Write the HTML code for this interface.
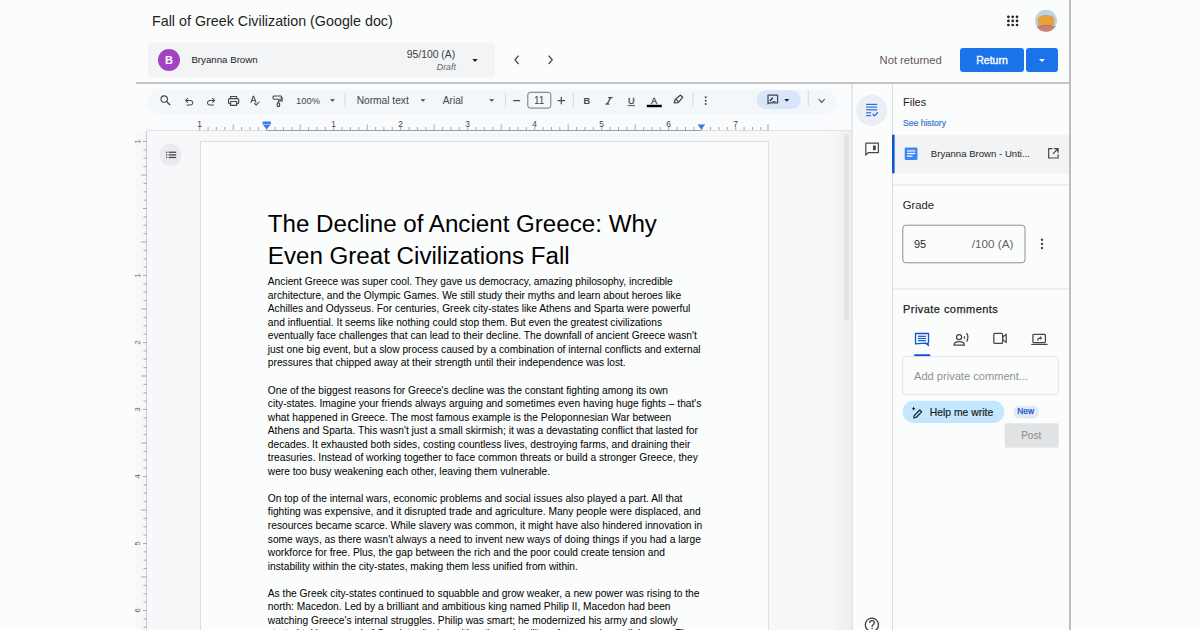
<!DOCTYPE html>
<html><head><meta charset="utf-8">
<style>
*{box-sizing:border-box;margin:0;padding:0}
html,body{width:1200px;height:630px;overflow:hidden;background:#fbfcfc;font-family:"Liberation Sans",sans-serif;color:#202124}
.a{position:absolute}
.nw{white-space:nowrap}
#title{left:152px;top:12px;font-size:14.3px;color:#1f1f1f;line-height:18px}
#stubar{left:147.5px;top:43.3px;width:347.7px;height:33.4px;background:#f3f4f6;border-radius:4px}
#av{left:158px;top:49px;width:22px;height:22px;border-radius:50%;background:#a142c3;color:#fff;font-size:11px;font-weight:bold;text-align:center;line-height:22px}
#sname{left:191.4px;top:53px;font-size:9.7px;line-height:13px;color:#202124}
#sgrade{left:406.8px;top:48.2px;font-size:10.35px;line-height:13px;color:#3c4043}
#draft{left:436.8px;top:61.6px;font-size:8.8px;font-style:italic;line-height:11px;color:#5f6368}
#topline{left:136px;top:82px;width:935px;height:2px;background:#c4c4c4}
#rline{left:1069px;top:0;width:2px;height:630px;background:#bdbdbd}
#rightbg{left:1071px;top:0;width:129px;height:630px;background:#fbfcfc}
#notret{left:879.6px;top:53.5px;font-size:11.2px;line-height:13px;color:#5f5a57}
#retbtn{left:960px;top:48px;width:64px;height:24px;background:#1a73e8;border-radius:3px;color:#fff;font-size:10.5px;-webkit-text-stroke:0.35px #fff;text-align:center;line-height:24px}
#retdd{left:1026px;top:48px;width:32px;height:24px;background:#1a73e8;border-radius:3px}
/* doc area */
#docarea{left:136px;top:84px;width:716px;height:546px;background:#f9fbfd}
#toolbar{left:148px;top:88px;width:692px;height:26px;background:#edf2fa;border-radius:13px}
#vruler{left:136px;top:131px;width:11px;height:499px;background:#f7f8f9;border-right:1px solid #c8cbcf}
#canvas{left:147px;top:130px;width:705px;height:500px;background:linear-gradient(90deg,#f7f8f9 0,#f7f8f9 680px,#eceef0 705px);border-top:1px solid #e1e3e6}
#page{left:201px;top:142px;width:567px;height:488px;background:#fbfdfd;box-shadow:0 0 0 1px #dcdee2}
#hruler{left:200px;top:116px;width:568px;height:15px}
#sbthumb{left:843.5px;top:134px;width:5.5px;height:186px;background:#e3e4e6;border-radius:1px}
#doctext{left:267.8px;top:207.6px;width:440px}
.t{font-size:24.15px;line-height:32px;color:#000}
.p{font-size:10.23px;line-height:13.55px;color:#000}
#sidecol{left:851px;top:84px;width:41px;height:546px;background:#fbfcfc;border-left:2px solid #e6e7e8}
#panel{left:892px;top:84px;width:177px;height:546px;background:#fbfcfc;border-left:1px solid #dadce0}
</style></head><body>
<div class="a" id="rightbg"></div>
<div class="a nw" id="title">Fall of Greek Civilization (Google doc)</div>
<div class="a" id="stubar"></div>
<div class="a" id="av">B</div>
<div class="a nw" id="sname">Bryanna Brown</div>
<div class="a nw" id="sgrade">95/100 (A)</div>
<div class="a nw" id="draft">Draft</div>
<div class="a nw" id="notret">Not returned</div>
<div class="a" id="retbtn">Return</div>
<div class="a" id="retdd"></div>

<div class="a" id="docarea"></div>
<svg class="a" style="left:0;top:0" width="1200" height="630" viewBox="0 0 1200 630">
<rect x="148" y="90" width="688" height="24" rx="12" fill="#f3f6fa"/>
<g fill="none" stroke="#444746" stroke-width="1.25" stroke-linecap="round">
 <circle cx="164.2" cy="99.1" r="3.2" stroke-width="1.1"/>
 <line x1="166.6" y1="101.5" x2="169.8" y2="104.7"/>
</g>
<g fill="#444746">
 <path transform="translate(182.9,108.2) scale(0.013)" d="M280-200v-80h284q63 0 109.5-40T720-420q0-60-46.5-100T564-560H312l104 104-56 56-200-200 200-200 56 56-104 104h252q97 0 166.5 63T800-420q0 94-69.5 157T564-200H280Z"/>
 <path transform="translate(204.9,108.2) scale(0.013)" d="M396-200q-97 0-166.5-63T160-420q0-94 69.5-157T396-640h252L544-744l56-56 200 200-200 200-56-56 104-104H396q-63 0-109.5 40T240-420q0 60 46.5 100T396-280h284v80H396Z"/>
 
 <path transform="translate(248.7,106.9) scale(0.0132)" d="M564-80 394-250l56-56 114 114 226-226 56 56L564-80ZM120-320l194-520h92l194 520h-88l-46-132H254l-46 132h-88Zm162-208h156l-76-216h-4l-76 216Z"/>
</g>
<g fill="none" stroke="#444746" stroke-width="1.15" stroke-linejoin="round">
 <rect x="273.1" y="96" width="8.4" height="3.2" rx="0.9"/>
 <polyline points="281.5,97.6 282.1,97.6 282.1,100.9 278.4,100.9 278.4,102.8"/>
 <rect x="277.2" y="102.8" width="2.4" height="3.6" rx="1"/>
 <path d="M230.6,98.6 v-2.1 h6 v2.1"/>
 <rect x="228.5" y="98.6" width="10.2" height="5" rx="1.2"/>
 <rect x="230.6" y="101.5" width="6" height="3.9" fill="#f3f6fa"/>
</g>
<g font-family="Liberation Sans" fill="#444746">
 <text x="296" y="104" font-size="9.4">100%</text>
 <text x="356.7" y="104" font-size="10.2">Normal text</text>
 <text x="442.8" y="104" font-size="10.1">Arial</text>
 <text x="539.2" y="104.3" font-size="10" text-anchor="middle">11</text>
</g>
<g fill="#444746">
 <path d="M330,99.2 h5 l-2.5,2.6z"/>
 <path d="M420.5,99.2 h5 l-2.5,2.6z"/>
 <path d="M489.2,99.2 h5 l-2.5,2.6z"/>
</g>
<g stroke="#d5d7da" stroke-width="1">
 <line x1="345" y1="93" x2="345" y2="107"/>
 <line x1="505.5" y1="93" x2="505.5" y2="107"/>
 <line x1="573.3" y1="93" x2="573.3" y2="107"/>
 <line x1="692.9" y1="93" x2="692.9" y2="106"/>
 <line x1="808.3" y1="90" x2="808.3" y2="106"/>
</g>
<g stroke="#444746" stroke-width="1.2" fill="none">
 <line x1="513.2" y1="100.6" x2="520.2" y2="100.6"/>
 <line x1="557.6" y1="100.6" x2="565" y2="100.6"/>
 <line x1="561.3" y1="96.9" x2="561.3" y2="104.3"/>
</g>
<rect x="527.8" y="92.3" width="23" height="15.8" rx="2.5" fill="none" stroke="#747775" stroke-width="1"/>
<g font-family="Liberation Sans" fill="#444746">
 <text x="583.6" y="104.4" font-size="9.2" font-weight="bold">B</text>
 <text x="631.3" y="103.6" font-size="9.2" text-anchor="middle" stroke="#444746" stroke-width="0.3">U</text>
 <text x="654" y="103.6" font-size="9.2" text-anchor="middle" stroke="#444746" stroke-width="0.3">A</text>
</g>
<g stroke="#444746" stroke-width="1.2" fill="none" stroke-linecap="butt">
 <line x1="610.6" y1="97.6" x2="607.2" y2="104"/>
 <line x1="608.3" y1="97.6" x2="612.6" y2="97.6"/>
 <line x1="605.2" y1="104" x2="609.4" y2="104"/>
 <line x1="627.6" y1="105.6" x2="635" y2="105.6" stroke-width="0.9"/>
</g>
<rect x="646.8" y="104.8" width="15" height="2.4" fill="#000"/>
<path d="M674.2,102.8 l1,-3.2 l5.3,-4.5 l2.2,2.2 l-4.5,5.3z" fill="none" stroke="#444746" stroke-width="1.3" stroke-linejoin="round"/><path d="M676.2,99.5 l2.4,2.4" stroke="#444746" stroke-width="1.1"/>
<g fill="#444746">
 <circle cx="705.7" cy="97.3" r="1"/>
 <circle cx="705.7" cy="100.7" r="1"/>
 <circle cx="705.7" cy="104.1" r="1"/>
</g>
<rect x="756.7" y="90.3" width="44" height="18.6" rx="9.3" fill="#d9e5fa"/>
<path d="M768,103.8 v-8.6 h9.6 v7.6 h-8.2z" fill="none" stroke="#444746" stroke-width="1.2" stroke-linejoin="round"/>
<line x1="769.8" y1="101.2" x2="772.8" y2="97.6" stroke="#1f1f1f" stroke-width="1.3"/>
<line x1="772.5" y1="101.5" x2="775.5" y2="101.5" stroke="#444746" stroke-width="0.9"/>
<path d="M784.3,99 h5 l-2.5,2.8z" fill="#1f1f1f"/>
<polyline points="818.7,99 821.7,102.4 824.7,99" fill="none" stroke="#444746" stroke-width="1.05"/>
</svg>

<div class="a" id="canvas"></div>
<div class="a" id="vruler"></div>
<div class="a" id="page"></div>
<div class="a" id="sbthumb"></div>
<div class="a" id="doctext">
<div class="t nw">The Decline of Ancient Greece: Why</div>
<div class="t nw">Even Great Civilizations Fall</div>
<div style="height:3.6px"></div>
<div class="p nw">Ancient Greece was super cool. They gave us democracy, amazing philosophy, incredible</div>
<div class="p nw">architecture, and the Olympic Games. We still study their myths and learn about heroes like</div>
<div class="p nw">Achilles and Odysseus. For centuries, Greek city-states like Athens and Sparta were powerful</div>
<div class="p nw">and influential. It seems like nothing could stop them. But even the greatest civilizations</div>
<div class="p nw">eventually face challenges that can lead to their decline. The downfall of ancient Greece wasn't</div>
<div class="p nw">just one big event, but a slow process caused by a combination of internal conflicts and external</div>
<div class="p nw">pressures that chipped away at their strength until their independence was lost.</div>
<div class="p">&nbsp;</div>
<div class="p nw">One of the biggest reasons for Greece's decline was the constant fighting among its own</div>
<div class="p nw">city-states. Imagine your friends always arguing and sometimes even having huge fights – that's</div>
<div class="p nw">what happened in Greece. The most famous example is the Peloponnesian War between</div>
<div class="p nw">Athens and Sparta. This wasn't just a small skirmish; it was a devastating conflict that lasted for</div>
<div class="p nw">decades. It exhausted both sides, costing countless lives, destroying farms, and draining their</div>
<div class="p nw">treasuries. Instead of working together to face common threats or build a stronger Greece, they</div>
<div class="p nw">were too busy weakening each other, leaving them vulnerable.</div>
<div class="p">&nbsp;</div>
<div class="p nw">On top of the internal wars, economic problems and social issues also played a part. All that</div>
<div class="p nw">fighting was expensive, and it disrupted trade and agriculture. Many people were displaced, and</div>
<div class="p nw">resources became scarce. While slavery was common, it might have also hindered innovation in</div>
<div class="p nw">some ways, as there wasn't always a need to invent new ways of doing things if you had a large</div>
<div class="p nw">workforce for free. Plus, the gap between the rich and the poor could create tension and</div>
<div class="p nw">instability within the city-states, making them less unified from within.</div>
<div class="p">&nbsp;</div>
<div class="p nw">As the Greek city-states continued to squabble and grow weaker, a new power was rising to the</div>
<div class="p nw">north: Macedon. Led by a brilliant and ambitious king named Philip II, Macedon had been</div>
<div class="p nw">watching Greece's internal struggles. Philip was smart; he modernized his army and slowly</div>
<div class="p nw">started taking control of Greek territories, either through military force or clever diplomacy. The</div>
</div>

<svg class="a" style="left:0;top:0" width="1200" height="630" viewBox="0 0 1200 630">
<g stroke="#9aa0a6" stroke-width="0.9"><line x1="199.7" y1="127" x2="199.7" y2="130.5"/><line x1="208.1" y1="127" x2="208.1" y2="130.5"/><line x1="216.4" y1="127" x2="216.4" y2="130.5"/><line x1="224.8" y1="127" x2="224.8" y2="130.5"/><line x1="233.2" y1="124.5" x2="233.2" y2="130.5"/><line x1="241.6" y1="127" x2="241.6" y2="130.5"/><line x1="249.9" y1="127" x2="249.9" y2="130.5"/><line x1="258.3" y1="127" x2="258.3" y2="130.5"/><line x1="266.7" y1="127" x2="266.7" y2="130.5"/><line x1="275.1" y1="127" x2="275.1" y2="130.5"/><line x1="283.4" y1="127" x2="283.4" y2="130.5"/><line x1="291.8" y1="127" x2="291.8" y2="130.5"/><line x1="300.2" y1="124.5" x2="300.2" y2="130.5"/><line x1="308.6" y1="127" x2="308.6" y2="130.5"/><line x1="316.9" y1="127" x2="316.9" y2="130.5"/><line x1="325.3" y1="127" x2="325.3" y2="130.5"/><line x1="333.7" y1="127" x2="333.7" y2="130.5"/><line x1="342.1" y1="127" x2="342.1" y2="130.5"/><line x1="350.4" y1="127" x2="350.4" y2="130.5"/><line x1="358.8" y1="127" x2="358.8" y2="130.5"/><line x1="367.2" y1="124.5" x2="367.2" y2="130.5"/><line x1="375.6" y1="127" x2="375.6" y2="130.5"/><line x1="383.9" y1="127" x2="383.9" y2="130.5"/><line x1="392.3" y1="127" x2="392.3" y2="130.5"/><line x1="400.7" y1="127" x2="400.7" y2="130.5"/><line x1="409.1" y1="127" x2="409.1" y2="130.5"/><line x1="417.4" y1="127" x2="417.4" y2="130.5"/><line x1="425.8" y1="127" x2="425.8" y2="130.5"/><line x1="434.2" y1="124.5" x2="434.2" y2="130.5"/><line x1="442.6" y1="127" x2="442.6" y2="130.5"/><line x1="450.9" y1="127" x2="450.9" y2="130.5"/><line x1="459.3" y1="127" x2="459.3" y2="130.5"/><line x1="467.7" y1="127" x2="467.7" y2="130.5"/><line x1="476.1" y1="127" x2="476.1" y2="130.5"/><line x1="484.4" y1="127" x2="484.4" y2="130.5"/><line x1="492.8" y1="127" x2="492.8" y2="130.5"/><line x1="501.2" y1="124.5" x2="501.2" y2="130.5"/><line x1="509.6" y1="127" x2="509.6" y2="130.5"/><line x1="518.0" y1="127" x2="518.0" y2="130.5"/><line x1="526.3" y1="127" x2="526.3" y2="130.5"/><line x1="534.7" y1="127" x2="534.7" y2="130.5"/><line x1="543.1" y1="127" x2="543.1" y2="130.5"/><line x1="551.5" y1="127" x2="551.5" y2="130.5"/><line x1="559.8" y1="127" x2="559.8" y2="130.5"/><line x1="568.2" y1="124.5" x2="568.2" y2="130.5"/><line x1="576.6" y1="127" x2="576.6" y2="130.5"/><line x1="585.0" y1="127" x2="585.0" y2="130.5"/><line x1="593.3" y1="127" x2="593.3" y2="130.5"/><line x1="601.7" y1="127" x2="601.7" y2="130.5"/><line x1="610.1" y1="127" x2="610.1" y2="130.5"/><line x1="618.5" y1="127" x2="618.5" y2="130.5"/><line x1="626.8" y1="127" x2="626.8" y2="130.5"/><line x1="635.2" y1="124.5" x2="635.2" y2="130.5"/><line x1="643.6" y1="127" x2="643.6" y2="130.5"/><line x1="652.0" y1="127" x2="652.0" y2="130.5"/><line x1="660.3" y1="127" x2="660.3" y2="130.5"/><line x1="668.7" y1="127" x2="668.7" y2="130.5"/><line x1="677.1" y1="127" x2="677.1" y2="130.5"/><line x1="685.5" y1="127" x2="685.5" y2="130.5"/><line x1="693.8" y1="127" x2="693.8" y2="130.5"/><line x1="702.2" y1="124.5" x2="702.2" y2="130.5"/><line x1="710.6" y1="127" x2="710.6" y2="130.5"/><line x1="719.0" y1="127" x2="719.0" y2="130.5"/><line x1="727.3" y1="127" x2="727.3" y2="130.5"/><line x1="735.7" y1="127" x2="735.7" y2="130.5"/><line x1="744.1" y1="127" x2="744.1" y2="130.5"/><line x1="752.5" y1="127" x2="752.5" y2="130.5"/><line x1="760.8" y1="127" x2="760.8" y2="130.5"/></g>
<g font-family="Liberation Sans" font-size="8.4" fill="#444746" text-anchor="middle"><text x="199.7" y="126.5">1</text><text x="333.7" y="126.5">1</text><text x="400.7" y="126.5">2</text><text x="467.7" y="126.5">3</text><text x="534.7" y="126.5">4</text><text x="601.7" y="126.5">5</text><text x="668.7" y="126.5">6</text><text x="735.7" y="126.5">7</text></g>
<g stroke="#9aa0a6" stroke-width="0.9"><line x1="143" y1="141.5" x2="146.5" y2="141.5"/><line x1="143.5" y1="149.9" x2="146.5" y2="149.9"/><line x1="143.5" y1="158.2" x2="146.5" y2="158.2"/><line x1="143.5" y1="166.6" x2="146.5" y2="166.6"/><line x1="141" y1="175.0" x2="146.5" y2="175.0"/><line x1="143.5" y1="183.4" x2="146.5" y2="183.4"/><line x1="143.5" y1="191.8" x2="146.5" y2="191.8"/><line x1="143.5" y1="200.1" x2="146.5" y2="200.1"/><line x1="143" y1="208.5" x2="146.5" y2="208.5"/><line x1="143.5" y1="216.9" x2="146.5" y2="216.9"/><line x1="143.5" y1="225.2" x2="146.5" y2="225.2"/><line x1="143.5" y1="233.6" x2="146.5" y2="233.6"/><line x1="141" y1="242.0" x2="146.5" y2="242.0"/><line x1="143.5" y1="250.4" x2="146.5" y2="250.4"/><line x1="143.5" y1="258.8" x2="146.5" y2="258.8"/><line x1="143.5" y1="267.1" x2="146.5" y2="267.1"/><line x1="143" y1="275.5" x2="146.5" y2="275.5"/><line x1="143.5" y1="283.9" x2="146.5" y2="283.9"/><line x1="143.5" y1="292.2" x2="146.5" y2="292.2"/><line x1="143.5" y1="300.6" x2="146.5" y2="300.6"/><line x1="141" y1="309.0" x2="146.5" y2="309.0"/><line x1="143.5" y1="317.4" x2="146.5" y2="317.4"/><line x1="143.5" y1="325.8" x2="146.5" y2="325.8"/><line x1="143.5" y1="334.1" x2="146.5" y2="334.1"/><line x1="143" y1="342.5" x2="146.5" y2="342.5"/><line x1="143.5" y1="350.9" x2="146.5" y2="350.9"/><line x1="143.5" y1="359.2" x2="146.5" y2="359.2"/><line x1="143.5" y1="367.6" x2="146.5" y2="367.6"/><line x1="141" y1="376.0" x2="146.5" y2="376.0"/><line x1="143.5" y1="384.4" x2="146.5" y2="384.4"/><line x1="143.5" y1="392.8" x2="146.5" y2="392.8"/><line x1="143.5" y1="401.1" x2="146.5" y2="401.1"/><line x1="143" y1="409.5" x2="146.5" y2="409.5"/><line x1="143.5" y1="417.9" x2="146.5" y2="417.9"/><line x1="143.5" y1="426.2" x2="146.5" y2="426.2"/><line x1="143.5" y1="434.6" x2="146.5" y2="434.6"/><line x1="141" y1="443.0" x2="146.5" y2="443.0"/><line x1="143.5" y1="451.4" x2="146.5" y2="451.4"/><line x1="143.5" y1="459.8" x2="146.5" y2="459.8"/><line x1="143.5" y1="468.1" x2="146.5" y2="468.1"/><line x1="143" y1="476.5" x2="146.5" y2="476.5"/><line x1="143.5" y1="484.9" x2="146.5" y2="484.9"/><line x1="143.5" y1="493.2" x2="146.5" y2="493.2"/><line x1="143.5" y1="501.6" x2="146.5" y2="501.6"/><line x1="141" y1="510.0" x2="146.5" y2="510.0"/><line x1="143.5" y1="518.4" x2="146.5" y2="518.4"/><line x1="143.5" y1="526.8" x2="146.5" y2="526.8"/><line x1="143.5" y1="535.1" x2="146.5" y2="535.1"/><line x1="143" y1="543.5" x2="146.5" y2="543.5"/><line x1="143.5" y1="551.9" x2="146.5" y2="551.9"/><line x1="143.5" y1="560.2" x2="146.5" y2="560.2"/><line x1="143.5" y1="568.6" x2="146.5" y2="568.6"/><line x1="141" y1="577.0" x2="146.5" y2="577.0"/><line x1="143.5" y1="585.4" x2="146.5" y2="585.4"/><line x1="143.5" y1="593.8" x2="146.5" y2="593.8"/><line x1="143.5" y1="602.1" x2="146.5" y2="602.1"/><line x1="143" y1="610.5" x2="146.5" y2="610.5"/><line x1="143.5" y1="618.9" x2="146.5" y2="618.9"/><line x1="143.5" y1="627.2" x2="146.5" y2="627.2"/></g>
<g font-family="Liberation Sans" font-size="7.5" fill="#5f6368" text-anchor="middle"><text transform="translate(140,141.5) rotate(-90)" x="0" y="0">1</text><text transform="translate(140,275.5) rotate(-90)" x="0" y="0">1</text><text transform="translate(140,342.5) rotate(-90)" x="0" y="0">2</text><text transform="translate(140,409.5) rotate(-90)" x="0" y="0">3</text><text transform="translate(140,476.5) rotate(-90)" x="0" y="0">4</text><text transform="translate(140,543.5) rotate(-90)" x="0" y="0">5</text><text transform="translate(140,610.5) rotate(-90)" x="0" y="0">6</text></g>
</svg>
<svg class="a" style="left:0;top:0" width="1200" height="630" viewBox="0 0 1200 630">
<circle cx="170.5" cy="154.8" r="11" fill="#e9ebee"/>
<g fill="#444746"><rect x="166" y="151.6" width="1.3" height="1.3"/><rect x="166" y="154.2" width="1.3" height="1.3"/><rect x="166" y="156.8" width="1.3" height="1.3"/>
<rect x="168.6" y="151.6" width="7.6" height="1.3"/><rect x="168.6" y="154.2" width="7.6" height="1.3"/><rect x="168.6" y="156.8" width="7.6" height="1.3"/></g>
<line x1="200" y1="130.5" x2="768" y2="130.5" stroke="#dadce0" stroke-width="1"/><line x1="266.7" y1="130.5" x2="701.3" y2="130.5" stroke="#9aa0a6" stroke-width="1"/><line x1="768" y1="124" x2="768" y2="130.5" stroke="#9aa0a6" stroke-width="0.9"/>
<path d="M262.6,121.6 h8.2 v2.6 l-4.1,5.4 l-4.1,-5.4z" fill="#3b7be6"/>
<line x1="263" y1="124.4" x2="270.4" y2="124.4" stroke="#fff" stroke-width="0.6"/>
<path d="M697.5,124.6 h7.6 l-3.8,5.2z" fill="#3b7be6"/>
</svg>
<div class="a" id="sidecol"></div>
<div class="a" id="panel"></div>
<svg class="a" style="left:0;top:0" width="1200" height="630" viewBox="0 0 1200 630">
<!-- header grid icon -->
<g fill="#1f1f1f">
 <circle cx="1008.4" cy="16.8" r="1.35"/><circle cx="1012.7" cy="16.8" r="1.35"/><circle cx="1017" cy="16.8" r="1.35"/>
 <circle cx="1008.4" cy="20.9" r="1.35"/><circle cx="1012.7" cy="20.9" r="1.35"/><circle cx="1017" cy="20.9" r="1.35"/>
 <circle cx="1008.4" cy="25" r="1.35"/><circle cx="1012.7" cy="25" r="1.35"/><circle cx="1017" cy="25" r="1.35"/>
</g>
<!-- avatar -->
<defs><clipPath id="avc"><circle cx="1046" cy="20.7" r="11"/></clipPath></defs>
<g clip-path="url(#avc)">
 <rect x="1035" y="9.7" width="22" height="22" fill="#b9d4f0"/>
 <path d="M1037.5,19 q1,-3 4,-3.2 q4,-1.8 8,-0.3 q4,0.3 5,3.5 l-0.5,6 q-8,2.5 -16,0z" fill="#e9a040"/>
 <path d="M1036,27 q10,-3 21,0 v6 h-21z" fill="#c98270"/>
 <path d="M1037,26.6 q9,-2.6 19,0" fill="none" stroke="#8a6a60" stroke-width="0.6"/>
</g>
<!-- student bar dropdown + chevrons -->
<path d="M472.3,59.1 h5.4 l-2.7,2.8z" fill="#1f1f1f"/>
<polyline points="518.6,55.6 515,59.8 518.6,64" fill="none" stroke="#444746" stroke-width="1.3"/>
<polyline points="548.6,55.6 552.2,59.8 548.6,64" fill="none" stroke="#444746" stroke-width="1.3"/>
<!-- return dropdown arrow -->
<path d="M1039,59 h6 l-3,3z" fill="#fff"/>
<!-- side column icons -->
<circle cx="871.7" cy="110.3" r="15.6" fill="#ebeff5"/>
<g fill="#2f6fd6">
 <rect x="866.1" y="103.8" width="11.1" height="1.2"/>
 <rect x="866.1" y="106.5" width="11.1" height="1.2"/>
 <rect x="866.1" y="109.2" width="11.1" height="1.2"/>
 <rect x="866.1" y="112.2" width="5" height="1.2"/>
 <rect x="866.1" y="115" width="5" height="1.2"/>
</g>
<polyline points="872.6,114 874.4,115.8 878,112.2" fill="none" stroke="#2f6fd6" stroke-width="1.3"/>
<path d="M865.8,155 v-11.8 h12.6 v9.4 h-10.2z" fill="none" stroke="#444746" stroke-width="1.2" stroke-linejoin="round"/>
<rect x="873" y="145.5" width="2.8" height="4.6" fill="#444746"/>
<!-- help icon -->
<circle cx="871.9" cy="624.8" r="6.6" fill="none" stroke="#3c3c3c" stroke-width="1.3"/>
<path d="M869.7,622.9 q0,-2.3 2.3,-2.3 q2.3,0 2.3,2.1 q0,1.3 -1.3,2 q-0.9,0.5 -0.9,1.7 v0.7" fill="none" stroke="#3c3c3c" stroke-width="1.25"/>
<circle cx="872.1" cy="628.6" r="0.75" fill="#3c3c3c"/>
<!-- file row -->
<rect x="892" y="134.7" width="177" height="38.6" fill="#f2f3f5"/>
<rect x="892" y="134.7" width="2.6" height="38.6" fill="#0b57d0"/>
<rect x="904.7" y="147.5" width="12.8" height="12.5" rx="1.2" fill="#4285f4"/>
<g fill="#fff"><rect x="907" y="150.3" width="8.2" height="1.2"/><rect x="907" y="152.9" width="8.2" height="1.2"/><rect x="907" y="155.5" width="5.5" height="1.2"/></g>
<path d="M1052.5,148.6 h-3.8 v9.4 h9.4 v-3.8 M1054,148.6 h4.1 v4.1 M1058.1,148.6 l-5.2,5.2" fill="none" stroke="#444746" stroke-width="1.2"/>
<line x1="892" y1="185" x2="1069" y2="185" stroke="#e3e3e3" stroke-width="1"/>
<line x1="892" y1="289" x2="1069" y2="289" stroke="#e3e3e3" stroke-width="1"/>
<!-- grade box -->
<rect x="902.8" y="225.2" width="122.2" height="37.6" rx="3" fill="none" stroke="#8e918f" stroke-width="1"/>
<g fill="#444746"><circle cx="1042" cy="239.8" r="1.2"/><circle cx="1042" cy="243.9" r="1.2"/><circle cx="1042" cy="248" r="1.2"/></g>
<!-- comment tab icons -->
<path d="M915.5,343.8 v-10.3 h13 v9.6 h-1.4 l1.6,2.4 -3.4,-2.4 z" fill="none" stroke="#0b57d0" stroke-width="1.3" stroke-linejoin="round"/>
<g stroke="#0b57d0" stroke-width="1.2"><line x1="917.9" y1="336.3" x2="926.1" y2="336.3"/><line x1="917.9" y1="338.5" x2="926.1" y2="338.5"/><line x1="917.9" y1="340.7" x2="926.1" y2="340.7"/></g>
<rect x="914" y="354.2" width="16.5" height="2.6" rx="1.3" fill="#0b57d0"/>
<g fill="none" stroke="#444746" stroke-width="1.25">
 <circle cx="959.1" cy="337.1" r="2.6"/>
 <path d="M954,345.2 q0,-3.5 5.2,-3.5 q5.2,0 5.2,3.5z"/>
 <path d="M964.3,336.3 q0.7,1.2 0,2.4 M966.6,333.2 q2.6,4.2 0,8.4"/>
 <rect x="993.8" y="333.4" width="8.8" height="10" rx="1"/>
 <path d="M1002.6,337 l3.6,-2.6 v8 l-3.6,-2.6z"/>
 <rect x="1032.9" y="334.3" width="12.5" height="8.2" rx="0.9"/>
 <line x1="1031.2" y1="344.4" x2="1047.6" y2="344.4" stroke-width="1.2"/>
 <path d="M1037.6,340.6 q0.3,-2.6 2.9,-2.7" stroke-width="1.25"/>
</g>
<path d="M1040.2,335.9 l2.1,2 -2.1,2z" fill="#444746"/>
<!-- input box -->
<rect x="902.7" y="356.6" width="155.6" height="37.8" rx="3" fill="none" stroke="#e3e3e3" stroke-width="1"/>
<!-- help me write pill -->
<rect x="902.7" y="400.8" width="101.6" height="22.2" rx="11.1" fill="#c2e7ff"/>
<path d="M914.2,415.6 l5.6,-5.6 1.9,1.9 -5.6,5.6 -2.3,0.4z" fill="none" stroke="#1f1f1f" stroke-width="1.25" stroke-linejoin="round"/>
<path d="M913.6,406.6 l0.65,1.45 1.45,0.65 -1.45,0.65 -0.65,1.45 -0.65,-1.45 -1.45,-0.65 1.45,-0.65z" fill="#1f1f1f"/>
<rect x="1013.7" y="405.8" width="25" height="12.6" rx="5" fill="#e4eaf4"/>
<rect x="1004.7" y="423.3" width="54" height="24.4" rx="2" fill="#e1e2e3"/>
</svg>
<div class="a nw" style="left:903px;top:95.7px;font-size:11px;line-height:13px;color:#1f1f1f">Files</div>
<div class="a nw" style="left:903px;top:117.8px;font-size:8.6px;line-height:10px;color:#3f74d0;-webkit-text-stroke:0.2px #3f74d0">See history</div>
<div class="a nw" style="left:930.8px;top:148px;font-size:9.6px;line-height:12px;color:#1f1f1f">Bryanna Brown - Unti...</div>
<div class="a nw" style="left:902.7px;top:198.8px;font-size:11.3px;line-height:13px;color:#1f1f1f">Grade</div>
<div class="a nw" style="left:914px;top:238px;font-size:10.9px;line-height:13px;color:#1f1f1f">95</div>
<div class="a nw" style="left:971.8px;top:236.8px;font-size:11.7px;line-height:13px;color:#5f6368">/100 (A)</div>
<div class="a nw" style="left:903px;top:302.8px;font-size:11px;line-height:13px;letter-spacing:0.45px;color:#1f1f1f;-webkit-text-stroke:0.25px #1f1f1f">Private comments</div>
<div class="a nw" style="left:914px;top:369.5px;font-size:11.1px;line-height:13px;color:#8f9194">Add private comment...</div>
<div class="a nw" style="left:929.7px;top:407.1px;font-size:10.4px;line-height:12px;-webkit-text-stroke:0.2px #1f1f1f;color:#1f1f1f">Help me write</div>
<div class="a nw" style="left:1017.3px;top:406.4px;font-size:8.3px;line-height:10px;-webkit-text-stroke:0.25px #0b57d0;color:#0b57d0">New</div>
<div class="a nw" style="left:1021.2px;top:429.5px;font-size:10px;line-height:12px;color:#8a8c8e">Post</div>

<div class="a" id="topline"></div>
<div class="a" id="rline"></div>
</body></html>
